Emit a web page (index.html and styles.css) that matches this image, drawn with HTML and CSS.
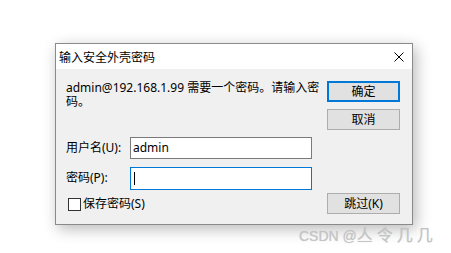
FILE: index.html
```html
<!DOCTYPE html>
<html lang="zh-CN">
<head>
<meta charset="utf-8">
<title>输入安全外壳密码</title>
<link rel="stylesheet" href="styles.css">
</head>
<body>
<div class="page">
  <div class="dialog">
    <div class="titlebar">
      <span class="title">输入安全外壳密码</span>
      <svg class="close" width="10" height="10" viewBox="0 0 10 10"><path d="M0.5 0.5L9.5 9.5M9.5 0.5L0.5 9.5" stroke="#000" stroke-width="1" fill="none"/></svg>
    </div>
    <div class="body">
      <div class="left">
        <p class="message">admin@192.168.1.99 需要一个密码。请输入密码。</p>
        <div class="row first">
          <label class="label">用户名(U):</label>
          <div class="input">admin</div>
        </div>
        <div class="row">
          <label class="label">密码(P):</label>
          <div class="input focus"><span class="caret"></span></div>
        </div>
        <div class="check-row">
          <span class="checkbox"></span>
          <span class="check-label">保存密码(S)</span>
        </div>
      </div>
      <div class="right">
        <div class="btn default">确定</div>
        <div class="btn">取消</div>
        <div class="btn skip">跳过(K)</div>
      </div>
    </div>
  </div>
  <div class="watermark">CSDN @<span class="wm-cjk">亼令几几</span></div>
</div>
</body>
</html>
```
FILE: styles.css
```css
html, body {
  margin: 0;
  padding: 0;
  background: #ffffff;
}
body {
  width: 451px;
  height: 253px;
  overflow: hidden;
  font-family: "Segoe UI", "Noto Sans", "Noto Sans CJK SC", sans-serif;
  font-size: 12px;
  color: #000;
}
.page {
  position: relative;
  padding: 43px 0 0 55px;
  height: 253px;
  box-sizing: border-box;
}
.dialog {
  width: 358px;
  height: 182px;
  box-sizing: border-box;
  border: 1px solid #8a8a8a;
  background: #f0f0f0;
  box-shadow: 3px 4px 14px rgba(0, 0, 0, 0.28);
  display: flex;
  flex-direction: column;
}
.titlebar {
  height: 25px;
  background: #ffffff;
  display: flex;
  align-items: center;
  justify-content: space-between;
  padding: 0 8px 0 3px;
  flex: none;
}
.title {
  line-height: 14px;
  font-family: "Noto Sans CJK SC", sans-serif;
}
.close {
  display: block;
  margin-top: 1px;
}
.body {
  flex: 1;
  display: flex;
  padding: 0 11px 10px 10px;
}
.left {
  width: 246px;
  display: flex;
  flex-direction: column;
}
.message {
  margin: 12px 0 0 0;
  width: 254px;
  line-height: 14px;
  height: 28px;
}
.row {
  display: flex;
  align-items: center;
  height: 22px;
  margin-top: 8px;
}
.row.first {
  margin-top: 28px;
}
.label {
  width: 64px;
  flex: none;
  line-height: 14px;
}
.input {
  width: 182px;
  height: 22px;
  box-sizing: border-box;
  border: 1px solid #7a7a7a;
  background: #fff;
  padding: 0 0 0 2px;
  line-height: 18px;
  display: flex;
  align-items: center;
}
.input.focus {
  border-color: #0078d7;
  height: 23px;
}
.caret {
  display: block;
  width: 1px;
  height: 13px;
  background: #000;
  margin-left: 1px;
}
.check-row {
  display: flex;
  align-items: center;
  margin-top: 8px;
  margin-left: 2px;
}
.checkbox {
  width: 13px;
  height: 13px;
  box-sizing: border-box;
  border: 1px solid #333;
  background: #fff;
  margin-right: 2px;
}
.check-label {
  line-height: 14px;
}
.right {
  margin-left: 15px;
  display: flex;
  flex-direction: column;
  padding-top: 12px;
}
.btn {
  width: 73px;
  height: 21px;
  box-sizing: border-box;
  border: 1px solid #adadad;
  background: #e1e1e1;
  display: flex;
  align-items: center;
  justify-content: center;
  line-height: 14px;
  margin-bottom: 7px;
}
.btn.default {
  border: 2px solid #0078d7;
}
.btn.skip {
  margin-top: auto;
  margin-bottom: 0;
}
.watermark {
  position: absolute;
  left: 299px;
  top: 226px;
  font-family: "Liberation Sans", Arial, sans-serif;
  font-size: 14px;
  line-height: 16px;
  color: #c4c4c4;
  text-shadow: 0 0 1px rgba(0,0,0,0.15);
}
.wm-cjk {
  font-family: "Noto Sans CJK SC", sans-serif;
  font-size: 16px;
  letter-spacing: 4px;
}
```
